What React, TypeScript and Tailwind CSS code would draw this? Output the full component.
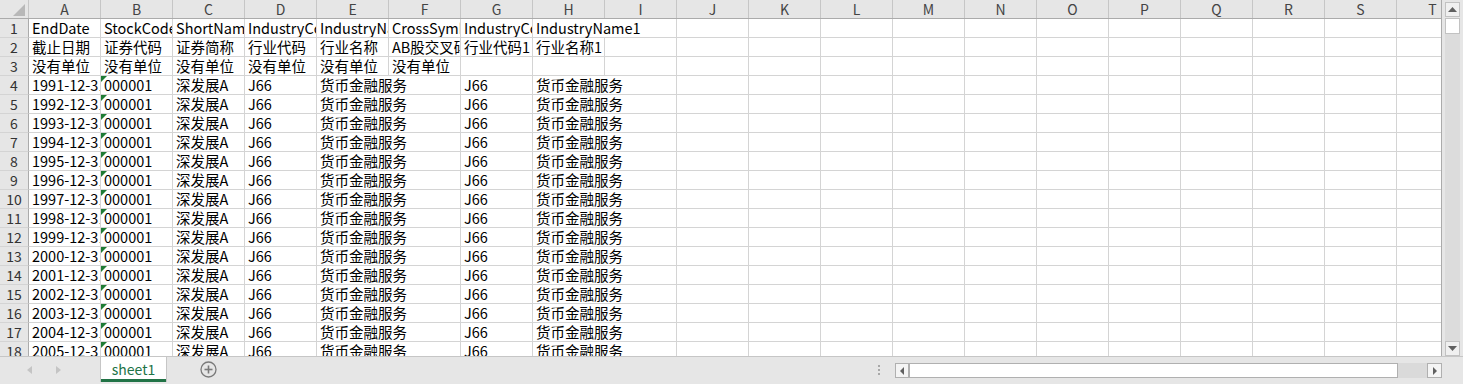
import React from "react";

const COLS = ["A","B","C","D","E","F","G","H","I","J","K","L","M","N","O","P","Q","R","S","T"];

const row1 = ["EndDate","StockCode","ShortName","IndustryCode","IndustryName","CrossSymbol","IndustryCode1","IndustryName1"];
const row2 = ["截止日期","证券代码","证券简称","行业代码","行业名称","AB股交叉码","行业代码1","行业名称1"];
const row3 = ["没有单位","没有单位","没有单位","没有单位","没有单位","没有单位","",""];

type Row = { cells: string[]; over: number[]; tri: boolean };

const rows: Row[] = [
  { cells: row1, over: [7], tri: false },
  { cells: row2, over: [], tri: false },
  { cells: row3, over: [], tri: false },
];
for (let y = 1991; y <= 2005; y++) {
  rows.push({
    cells: [`${y}-12-31`, "000001", "深发展A", "J66", "货币金融服务", "", "J66", "货币金融服务"],
    over: [4, 7],
    tri: true,
  });
}

const font = "font-['Microsoft_YaHei','Noto_Sans_CJK_SC',sans-serif]";

function Cell({ text, over, tri }: { text: string; over: boolean; tri: boolean }) {
  return (
    <div
      className={`relative h-[19px] w-[72px] flex-none border-b border-[#d4d4d4] whitespace-nowrap pl-[3px] text-[14.5px] leading-[18px] text-black ${
        over ? "overflow-visible z-10" : "overflow-hidden border-r"
      }`}
    >
      {tri && (
        <span className="absolute left-0 top-0 h-0 w-0 border-t-[6px] border-r-[6px] border-t-[#1e7b34] border-r-transparent" />
      )}
      {text}
    </div>
  );
}

export default function App() {
  return (
    <div className={`flex h-[384px] w-[1463px] flex-col overflow-hidden bg-[#e6e6e6] ${font}`}>
      <div className="flex h-[357px] flex-none border-b border-[#c6c6c6]">
        {/* grid */}
        <div className="flex w-[1442px] flex-none flex-col overflow-hidden border-r border-[#ababab] bg-white">
          {/* header row */}
          <div className="flex h-[19px] flex-none border-b border-[#ababab] bg-[#e6e6e6]">
            <div className="relative h-[18px] w-[29px] flex-none border-r border-[#c6c6c6]">
              <svg className="absolute bottom-[2px] right-[3px]" width="12" height="12" viewBox="0 0 12 12">
                <polygon points="12,0 12,12 0,12" fill="#b8b8b8" />
              </svg>
            </div>
            {COLS.map((c) => (
              <div
                key={c}
                className="flex h-[18px] w-[72px] flex-none items-center justify-center border-r border-[#c6c6c6] text-[14px] leading-[18px] text-[#444]"
              >
                {c}
              </div>
            ))}
          </div>
          {rows.map((r, i) => (
            <div key={i} className="flex h-[19px] flex-none">
              <div className="flex h-[19px] w-[29px] flex-none items-center justify-center border-r border-b border-r-[#ababab] border-b-[#d4d4d4] bg-[#e6e6e6] text-[14px] leading-[18px] text-[#333]">
                {i + 1}
              </div>
              {COLS.map((c, j) => (
                <Cell
                  key={c}
                  text={r.cells[j] ?? ""}
                  over={r.over.includes(j)}
                  tri={r.tri && j === 1}
                />
              ))}
            </div>
          ))}
        </div>
        {/* vertical scrollbar */}
        <div className="flex w-[21px] flex-none flex-col items-start pl-[3px] pt-[2px]">
          <div className="flex h-[15px] w-[15px] items-center justify-center border border-[#c2c2c2] bg-[#f0f0f0]">
            <svg width="9" height="5" viewBox="0 0 9 5"><polygon points="4.5,0 9,5 0,5" fill="#606060" /></svg>
          </div>
          <div className="mt-[1px] h-[16px] w-[15px] border border-[#c2c2c2] bg-white" />
          <div className="w-[15px] flex-1 bg-[#dcdcdc]" />
          <div className="flex h-[15px] w-[15px] items-center justify-center border border-[#c2c2c2] bg-[#f0f0f0]">
            <svg width="9" height="5" viewBox="0 0 9 5"><polygon points="0,0 9,0 4.5,5" fill="#606060" /></svg>
          </div>
        </div>
      </div>
      {/* tab bar */}
      <div className="flex h-[27px] flex-none items-start">
        <div className="flex h-[25px] w-[100px] flex-none items-center">
          <svg className="ml-[27px]" width="5" height="8" viewBox="0 0 5 8"><polygon points="5,0 5,8 0,4" fill="#c4c4c4" /></svg>
          <svg className="ml-[24px]" width="5" height="8" viewBox="0 0 5 8"><polygon points="0,0 0,8 5,4" fill="#c4c4c4" /></svg>
        </div>
        <div className="flex h-[25px] w-[67px] flex-none flex-col border-x border-[#c6c6c6] bg-white">
          <div className="flex flex-1 items-center justify-center pt-[1px] text-[14px] leading-[18px] text-[#217346]">sheet1</div>
          <div className="mx-[0px] h-[3px] bg-[#217346]" />
        </div>
        <div className="ml-[33px] flex h-[25px] flex-none items-center">
          <svg width="17" height="17" viewBox="0 0 17 17">
            <circle cx="8.5" cy="8.5" r="7.5" fill="none" stroke="#7a7a7a" strokeWidth="1.3" />
            <line x1="8.5" y1="4.5" x2="8.5" y2="12.5" stroke="#7a7a7a" strokeWidth="1.6" />
            <line x1="4.5" y1="8.5" x2="12.5" y2="8.5" stroke="#7a7a7a" strokeWidth="1.6" />
          </svg>
        </div>
        <div className="flex-1" />
        <div className="mr-[15px] mt-[8px] flex flex-col gap-[2px]">
          <div className="h-[2px] w-[2px] bg-[#a8a8a8]" />
          <div className="h-[2px] w-[2px] bg-[#a8a8a8]" />
          <div className="h-[2px] w-[2px] bg-[#a8a8a8]" />
        </div>
        <div className="mt-[6px] flex h-[15px] w-[547px] flex-none">
          <div className="flex h-[15px] w-[14px] flex-none items-center justify-center border border-[#b0b0b0] bg-[#f4f4f4]">
            <svg width="4" height="8" viewBox="0 0 4 8"><polygon points="4,0 4,8 0,4" fill="#606060" /></svg>
          </div>
          <div className="h-[15px] w-[489px] flex-none border border-[#b0b0b0] bg-white" />
          <div className="h-[15px] flex-1 bg-[#dadada]" />
          <div className="flex h-[15px] w-[15px] flex-none items-center justify-center border border-[#b0b0b0] bg-[#f4f4f4]">
            <svg width="4" height="8" viewBox="0 0 4 8"><polygon points="0,0 0,8 4,4" fill="#606060" /></svg>
          </div>
        </div>
        <div className="w-[21px] flex-none" />
      </div>
    </div>
  );
}
